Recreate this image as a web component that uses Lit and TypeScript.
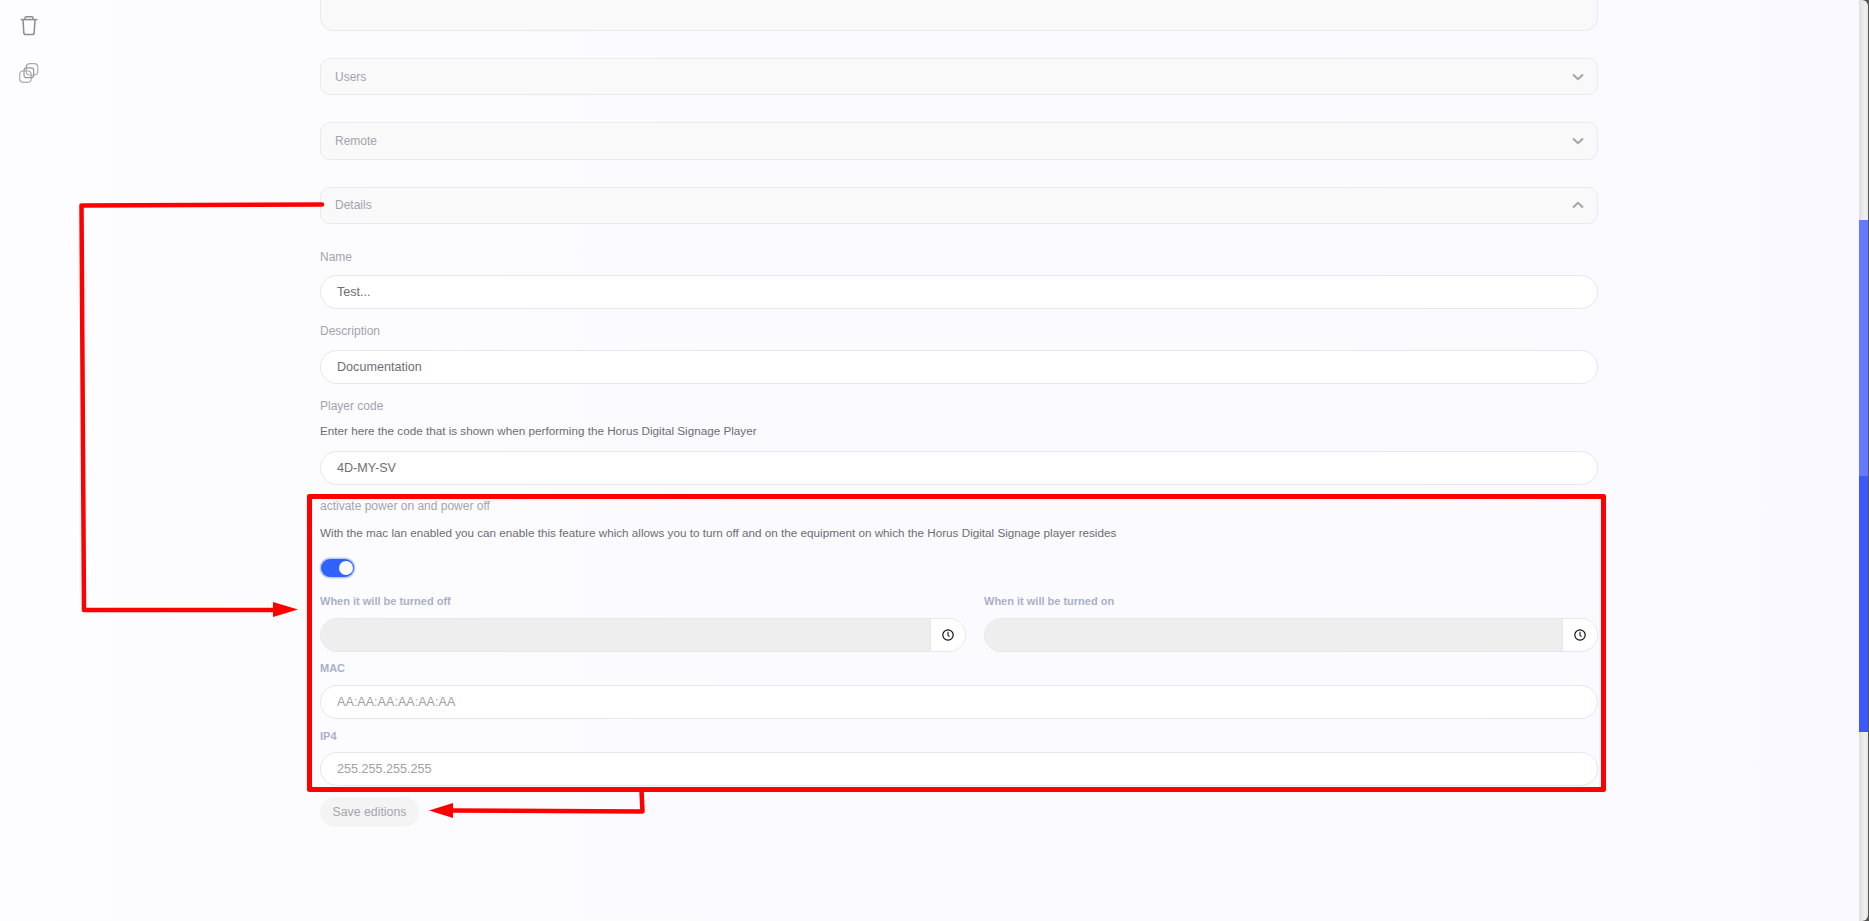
import { LitElement, html, css, svg } from "lit";
import { customElement } from "lit/decorators.js";

const chevron = (up: boolean) => html`<svg class="chev" viewBox="0 0 12 8" width="12" height="8">
  <path d=${up ? "M1 6.500 6 1.800l5 4.700" : "M1 1.500 6 6.200l5-4.700"} fill="none" stroke="#a3a3ad" stroke-width="2"/>
</svg>`;

const clock = html`<svg viewBox="0 0 12 12" width="12" height="12">
  <circle cx="6" cy="6" r="5.200" fill="none" stroke="#111" stroke-width="1.200"/>
  <path d="M6 2.800V6.300l1.500 1.400" fill="none" stroke="#111" stroke-width="1.100"/>
</svg>`;

@customElement("app-root")
export class AppRoot extends LitElement {
  static styles = css`
    :host {
      display: block;
      position: relative;
      height: 921px;
      overflow: hidden;
      font-family: "Liberation Sans", Arial, sans-serif;
      font-size: 12px;
      background: linear-gradient(90deg, #fdfdff 0%, #fbfbff 40%, #faf9ff 100%);
    }
    .page { display: flex; height: 921px; }
    .side {
      width: 320px;
      flex: none;
      display: flex;
      flex-direction: column;
      padding: 16px 0 0 20px;
      box-sizing: border-box;
      gap: 27px;
    }
    .side svg { display: block; }
    .copy { margin-left: -1px; }
    .form { width: 1278px; flex: none; display: flex; flex-direction: column; }
    .bar {
      box-sizing: border-box;
      height: 37.400px;
      border: 1px solid #e9e9ef;
      border-radius: 10px;
      background: #f9f9f9;
      display: flex;
      align-items: center;
      justify-content: space-between;
      padding: 0 13px 0 14px;
      color: #a3a3ad;
      margin-bottom: 27px;
    }
    .bar.top {
      height: 31px;
      border-top: none;
      border-radius: 0 0 14px 14px;
    }
    .bar.last { margin-bottom: 0; }
    .chev { display: block; }
    .lbl { color: #a3a3ad; line-height: 14px; }
    .help { color: #6c6c74; font-size: 11.700px; line-height: 14px; }
    .strong { color: #a9b0c6; font-weight: 700; font-size: 11px; line-height: 14px; }
    .input {
      box-sizing: border-box;
      height: 34px;
      background: #fff;
      border: 1px solid #e6e6ec;
      border-radius: 17px;
      padding: 0 16px;
      display: flex;
      align-items: center;
      color: #6e6e76;
      font-size: 12.600px;
    }
    .input.ph { color: #a0a0a6; }
    .mt-26 { margin-top: 26px; }
    .mt-15 { margin-top: 15px; }
    .mt-14 { margin-top: 14px; }
    .mt-13 { margin-top: 13px; }
    .mt-12 { margin-top: 12px; }
    .mt-11 { margin-top: 11px; }
    .mt-10 { margin-top: 10px; }
    .mt-9 { margin-top: 9px; }
    .switch {
      width: 33px;
      height: 18px;
      margin: 19px 0 0 1px;
      border-radius: 9px;
      background: #2f62ff;
      box-shadow: 0 0 0 1.500px #bccbff;
      position: relative;
    }
    .knob {
      position: absolute;
      right: 1px;
      top: 2px;
      width: 14px;
      height: 14px;
      border-radius: 50%;
      background: #fff;
    }
    .times { display: grid; grid-template-columns: 646px 1fr; column-gap: 18px; margin-top: 17px; }
    .time-group {
      box-sizing: border-box;
      display: flex;
      height: 34px;
      margin-top: 10px;
      border: 1px solid #e6e6ec;
      border-radius: 17px;
      overflow: hidden;
    }
    .time-fill { flex: 1; background: #eeeeee; }
    .time-btn {
      width: 35px;
      flex: none;
      background: #fff;
      border-left: 1px solid #e6e6ec;
      box-sizing: border-box;
      display: flex;
      align-items: center;
      justify-content: center;
    }
    .save {
      align-self: flex-start;
      margin-top: 11px;
      height: 30px;
      width: 99px;
      border-radius: 15px;
      background: #f4f4f5;
      color: #a6a6ab;
      display: flex;
      align-items: center;
      justify-content: center;
      font-size: 12.300px;
    }
    .scroll {
      position: absolute;
      left: 1859px;
      top: 0;
      width: 10px;
      height: 921px;
      background: #555;
    }
    .track {
      width: 9px;
      height: 921px;
      overflow: hidden;
      border-radius: 0 6px 6px 0;
      background: linear-gradient(90deg, #dedede, #eeeeee 60%, #e8e8e8);
      display: flex;
      flex-direction: column;
    }
    .thumb-a { margin-top: 220px; height: 256px; background: #6479ff; }
    .thumb-b { height: 256px; background: #3a5aff; }
    .marks { position: absolute; left: 0; top: 0; pointer-events: none; }
  `;

  render() {
    return html`
      <div class="page">
        <div class="side">
          <svg viewBox="0 0 18 20" width="18" height="20">
            <g fill="none" stroke="#8d8d93" stroke-width="1.500">
              <path d="M.6 3.600h16.800"/>
              <path d="M5 3.600V2q0-1.200 1.200-1.200h5.600Q13 .8 13 2v1.600"/>
              <path d="M3 3.600l.8 13q.1 1.900 2 1.900h6.400q1.900 0 2-1.900l.8-13"/>
            </g>
          </svg>
          <svg class="copy" viewBox="0 0 20 20" width="20" height="20">
            <g fill="none" stroke-width="1.200">
              <rect x=".7" y="8" width="11.500" height="11.300" rx="3.500" stroke="#ababaf"/>
              <rect x="7.300" y=".7" width="11.500" height="11.300" rx="3.500" stroke="#ababaf"/>
              <rect x="5" y="4.800" width="9.700" height="9.900" rx="2.500" stroke="#98989d"/>
            </g>
          </svg>
        </div>
        <div class="form">
          <div class="bar top"></div>
          <div class="bar"><span>Users</span>${chevron(false)}</div>
          <div class="bar"><span>Remote</span>${chevron(false)}</div>
          <div class="bar last"><span>Details</span>${chevron(true)}</div>

          <div class="lbl mt-26">Name</div>
          <div class="input mt-11">Test...</div>
          <div class="lbl mt-15">Description</div>
          <div class="input mt-12">Documentation</div>
          <div class="lbl mt-15">Player code</div>
          <div class="help mt-11">Enter here the code that is shown when performing the Horus Digital Signage Player</div>
          <div class="input mt-13">4D-MY-SV</div>
          <div class="lbl mt-14">activate power on and power off</div>
          <div class="help mt-13">With the mac lan enabled you can enable this feature which allows you to turn off and on the equipment on which the Horus Digital Signage player resides</div>
          <div class="switch"><div class="knob"></div></div>
          <div class="times">
            <div>
              <div class="strong">When it will be turned off</div>
              <div class="time-group"><div class="time-fill"></div><div class="time-btn">${clock}</div></div>
            </div>
            <div>
              <div class="strong">When it will be turned on</div>
              <div class="time-group"><div class="time-fill"></div><div class="time-btn">${clock}</div></div>
            </div>
          </div>
          <div class="strong mt-9">MAC</div>
          <div class="input ph mt-10">AA:AA:AA:AA:AA:AA</div>
          <div class="strong mt-10">IP4</div>
          <div class="input ph mt-9">255.255.255.255</div>
          <div class="save">Save editions</div>
        </div>
      </div>
      <div class="scroll"><div class="track"><div class="thumb-a"></div><div class="thumb-b"></div></div></div>
      <svg class="marks" width="1869" height="921" viewBox="0 0 1869 921">
        ${svg`
          <rect x="309.500" y="496.500" width="1294" height="293" fill="none" stroke="#ff0000" stroke-width="5" stroke-linejoin="round"/>
          <path d="M322 204.500 81.500 205.500 84 610H275" fill="none" stroke="#ff0000" stroke-width="4.500" stroke-linecap="round" stroke-linejoin="round"/>
          <path d="M273 602v15l25-7.500z" fill="#ff0000"/>
          <path d="M641.500 790 642.500 811.500 450 810.500" fill="none" stroke="#ff0000" stroke-width="4.500" stroke-linejoin="round"/>
          <path d="M453 803v15L429 810.500z" fill="#ff0000"/>
        `}
      </svg>
    `;
  }
}
